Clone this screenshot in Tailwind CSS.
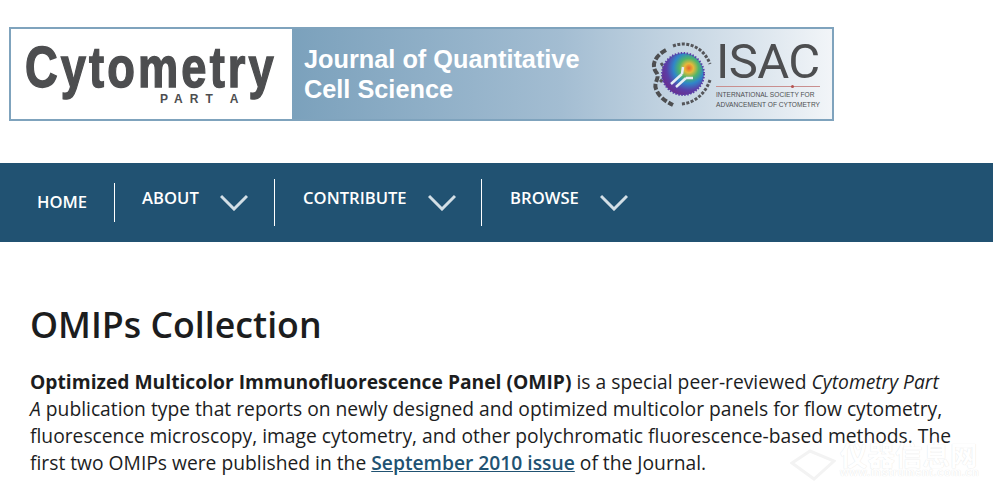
<!DOCTYPE html>
<html lang="en">
<head>
    <meta charset="UTF-8">
    <title>OMIPs Collection</title>
    <script src="https://cdn.jsdelivr.net/npm/@tailwindcss/browser@4"></script>
</head>
<body class="bg-white font-['Open_Sans',sans-serif] text-[#1c1d1e] overflow-hidden">
    <!-- Banner -->
    <div class="pt-[27px] pl-[9px]">
        <div class="flex w-[825px] h-[94px] border-2 border-[#7fa3bd]">
            <div class="w-[281px] h-full bg-white pl-[14px] relative overflow-hidden font-['Liberation_Sans',sans-serif] text-[#4d4e50]">
                <div class="text-[58px] font-bold leading-[58px] mt-[9px] origin-left scale-x-[0.78] tracking-[4px] whitespace-nowrap [-webkit-text-stroke:1.5px_#4d4e50]">Cytometry</div>
                <div class="absolute left-[149px] top-[64px] text-[12px] font-bold leading-[12px] tracking-[7px] whitespace-nowrap">PART A</div>
            </div>
            <div class="flex-1 h-full flex justify-between bg-gradient-to-r from-[#7ba1bc] via-[#a3bdd2] to-[#f2f5f8] font-['Liberation_Sans',sans-serif]">
                <div class="pl-[12px] pt-[15px] text-white font-bold text-[25.3px] leading-[30px]">
                    <div>Journal of Quantitative</div>
                    <div>Cell Science</div>
                </div>
                <div class="flex items-center pr-[12px] gap-[4px]">
                    <svg width="62" height="72" viewBox="0 0 62 72">
                        <defs>
                            <radialGradient id="flow" cx="64%" cy="36%" r="68%">
                                <stop offset="0" stop-color="#e8632a"/>
                                <stop offset="0.16" stop-color="#e6b93a"/>
                                <stop offset="0.34" stop-color="#4fb56a"/>
                                <stop offset="0.54" stop-color="#2f86c9"/>
                                <stop offset="0.78" stop-color="#5a3fa8"/>
                                <stop offset="1" stop-color="#6a2f8f"/>
                            </radialGradient>
                        </defs>
                        <path d="M16 12 C5 18 1 27 6 34 C11 40 3 44 6 51 C9 59 15 63 23 67" fill="none" stroke="#4d4e50" stroke-width="4" stroke-dasharray="6 2"/>
                        <path d="M11 25 C16 32 16 38 10 44 M23 8 C38 2 54 10 60 26 M60 42 C56 54 46 65 31 66" fill="none" stroke="#55565a" stroke-width="3" stroke-dasharray="3 1.5"/>
                        <circle cx="33" cy="36" r="21" fill="url(#flow)" stroke="#5a3fa8" stroke-width="2" stroke-dasharray="1.5 1.5"/>
                        <path d="M21 46 L32 36 M26 49 L36 40 M32 36 L33 29 M36 40 L43 40" stroke="#e6eef4" stroke-width="2.5" fill="none"/>
                    </svg>
                    <div class="w-[104px] text-[#4d4e50] pt-[1px]">
                        <div class="text-[49px] leading-[44px] tracking-[-0.6px] font-['Roboto',sans-serif] whitespace-nowrap">ISAC</div>
                        <div class="h-px bg-[#c98f8f] mt-[2px] relative">
                            <span class="absolute left-[75px] -top-[1px] size-[3px] rounded-full bg-[#b5524f]"></span>
                        </div>
                        <div class="text-[6.6px] leading-[10px] mt-[3px] whitespace-nowrap">INTERNATIONAL SOCIETY FOR<br>ADVANCEMENT OF CYTOMETRY</div>
                    </div>
                </div>
            </div>
        </div>
    </div>

    <!-- Nav -->
    <nav class="mt-[42px] h-[79px] bg-[#215272] flex items-center text-white font-semibold text-[16.6px]">
        <a href="#" class="pl-[37px] pr-[27px] h-[39px] flex items-center border-r border-white">HOME</a>
        <a href="#" class="w-[160px] pl-[27px] h-[47px] flex items-center gap-[21px] border-r border-white">
            <span class="-mt-[9px]">ABOUT</span>
            <svg width="28" height="17" viewBox="0 0 28 17" fill="none" stroke="#d3dfe6" stroke-width="3"><path d="M1 2 L14 15 L27 2"/></svg>
        </a>
        <a href="#" class="w-[207px] pl-[28px] h-[47px] flex items-center gap-[21px] border-r border-white">
            <span class="-mt-[9px]">CONTRIBUTE</span>
            <svg width="28" height="17" viewBox="0 0 28 17" fill="none" stroke="#d3dfe6" stroke-width="3"><path d="M1 2 L14 15 L27 2"/></svg>
        </a>
        <a href="#" class="pl-[28px] h-[47px] flex items-center gap-[21px]">
            <span class="-mt-[9px]">BROWSE</span>
            <svg width="28" height="17" viewBox="0 0 28 17" fill="none" stroke="#d3dfe6" stroke-width="3"><path d="M1 2 L14 15 L27 2"/></svg>
        </a>
    </nav>

    <!-- Content -->
    <main class="pl-[30px] pt-[59px]">
        <h1 class="text-[35.7px] leading-[46px] font-semibold">OMIPs Collection</h1>
        <p class="mt-[21px] w-[923px] text-[19.25px] leading-[27px]">
            <strong class="font-bold">Optimized Multicolor Immunofluorescence Panel (OMIP)</strong> is a special peer-reviewed <em>Cytometry Part A</em> publication type that reports on newly designed and optimized multicolor panels for flow cytometry, fluorescence microscopy, image cytometry, and other polychromatic fluorescence-based methods. The first two OMIPs were published in the <a href="#" class="font-semibold text-[#215272] underline">September 2010 issue</a> of the Journal.
        </p>
    </main>

    <!-- Watermark -->
    <svg class="absolute left-[790px] top-[449px]" width="46" height="32" viewBox="0 0 46 32" fill="none" stroke="#f3f3f3" stroke-width="3">
        <path d="M2 14 L20 2 L44 12 L24 30 Z"/>
    </svg>
    <div class="absolute left-[840px] top-[442px] text-white [text-shadow:0_0_1px_#dcdcdc] font-['Noto_Sans_CJK_SC',sans-serif]">
        <div class="text-[27.5px] leading-[24px] font-bold whitespace-nowrap">仪器信息网</div>
        <div class="text-[11px] leading-[12px] font-bold whitespace-nowrap tracking-[0.6px] font-['Liberation_Sans',sans-serif]">www.instrument.com.cn</div>
    </div>
</body>
</html>
